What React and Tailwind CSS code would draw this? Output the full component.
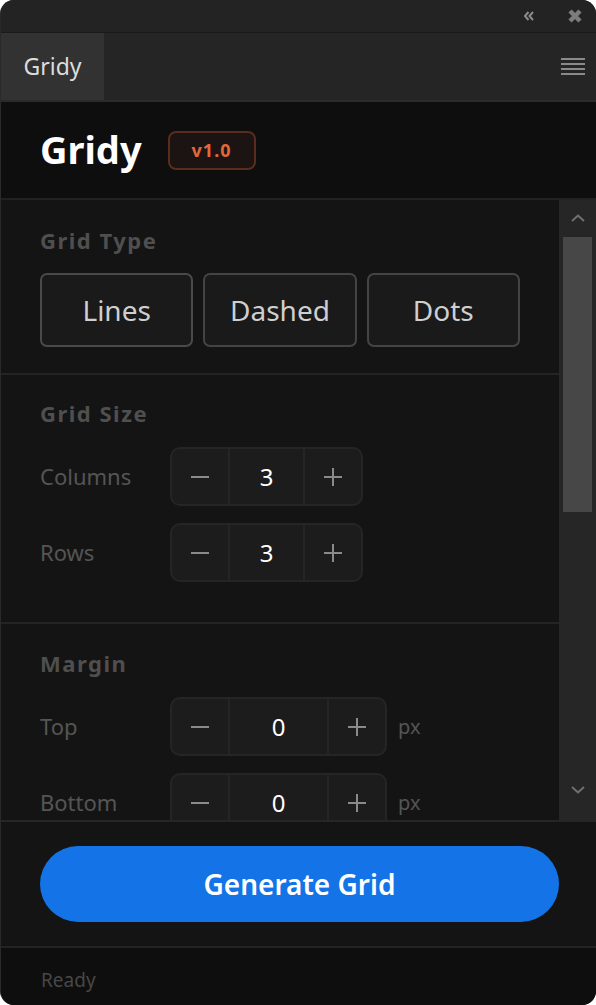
import React, { useState } from 'react';

const font = { fontFamily: '"Noto Sans", "Open Sans", sans-serif' };

function Stepper({ value, onChange, valueWidth }) {
  return (
    <div className="flex h-[59px] rounded-[10px] border-2 border-[#252525] bg-[#1c1c1c] overflow-hidden">
      <button
        onClick={() => onChange(value - 1)}
        className="w-[58px] flex items-center justify-center text-[#8a8a8a] border-r-2 border-[#252525]"
      >
        <svg width="18" height="2" viewBox="0 0 18 2"><rect width="18" height="2" fill="currentColor" /></svg>
      </button>
      <div className={`${valueWidth} flex items-center justify-center text-white text-[24px]`}>{value}</div>
      <button
        onClick={() => onChange(value + 1)}
        className="w-[58px] flex items-center justify-center text-[#8a8a8a] border-l-2 border-[#252525]"
      >
        <svg width="18" height="18" viewBox="0 0 18 18">
          <rect y="8" width="18" height="2" fill="currentColor" />
          <rect x="8" width="2" height="18" fill="currentColor" />
        </svg>
      </button>
    </div>
  );
}

function Row({ label, children }) {
  return (
    <div className="flex items-center">
      <span className="w-[130px] text-[22px] text-[#555]">{label}</span>
      {children}
    </div>
  );
}

function SectionTitle({ children }) {
  return <h3 className="text-[22px] font-bold tracking-[1.5px] text-[#4f4f4f] leading-[30px]">{children}</h3>;
}

export default function App() {
  const [type, setType] = useState('Lines');
  const [cols, setCols] = useState(3);
  const [rows, setRows] = useState(3);
  const [top, setTop] = useState(0);
  const [bottom, setBottom] = useState(0);

  return (
    <div className="w-[596px] h-[1005px] bg-white" style={font}>
      <div className="h-full flex flex-col rounded-[14px] overflow-hidden bg-[#141414] border-l border-[#2a2a2a]">
        {/* title bar */}
        <div className="h-[33px] shrink-0 bg-[#232323] border-b border-[#1a1a1a] flex items-center justify-end gap-[34px] pr-[14px]">
          <svg width="10" height="10" viewBox="0 0 10 10" className="text-[#8a8a8a]">
            <path d="M4.5 1 L1 5 L4.5 9 M9 1 L5.5 5 L9 9" fill="none" stroke="currentColor" strokeWidth="2" />
          </svg>
          <svg width="14" height="14" viewBox="0 0 14 14" className="text-[#7c7c7c]">
            <path d="M2 2 L12 12 M12 2 L2 12" fill="none" stroke="currentColor" strokeWidth="4.5" />
          </svg>
        </div>

        {/* tab bar */}
        <div className="h-[69px] shrink-0 bg-[#252525] flex items-stretch justify-between border-b-2 border-[#2b2b2b]">
          <div className="w-[103px] bg-[#323232] flex items-center justify-center text-[23px] text-[#dcdcdc]">Gridy</div>
          <div className="flex flex-col justify-center gap-[3px] pr-[11px]">
            <span className="block w-[24px] h-[2px] bg-[#8a8a8a]" />
            <span className="block w-[24px] h-[2px] bg-[#8a8a8a]" />
            <span className="block w-[24px] h-[2px] bg-[#8a8a8a]" />
            <span className="block w-[24px] h-[2px] bg-[#8a8a8a]" />
          </div>
        </div>

        {/* header */}
        <div className="h-[98px] shrink-0 bg-[#0e0e0e] flex items-center gap-[26px] pl-[39px] border-b-2 border-[#222]">
          <h1 className="text-[38px] font-bold text-white leading-none pb-[2px]">Gridy</h1>
          <span className="h-[39px] px-[22px] flex items-center rounded-[8px] border-2 border-[#5a2c1b] bg-[#1c1412] text-[#e2683a] text-[18px] font-bold tracking-[1px]">
            v1.0
          </span>
        </div>

        {/* content */}
        <div className="h-[620px] shrink-0 flex">
          <div className="flex-1 overflow-hidden">
            <section className="px-[39px] pt-[25px] pb-[26px] border-b-2 border-[#242424]">
              <SectionTitle>Grid Type</SectionTitle>
              <div className="mt-[18px] grid grid-cols-3 gap-[10px]">
                {['Lines', 'Dashed', 'Dots'].map((t) => (
                  <button
                    key={t}
                    onClick={() => setType(t)}
                    className={`h-[74px] rounded-[7px] border-2 ${type === t ? 'border-[#4a4a4a]' : 'border-[#444]'} bg-[#1a1a1a] text-[28px] text-[#cfcfcf]`}
                  >
                    {t}
                  </button>
                ))}
              </div>
            </section>

            <section className="px-[39px] pt-[23px] pb-[40px] border-b-2 border-[#242424]">
              <SectionTitle>Grid Size</SectionTitle>
              <div className="mt-[19px] flex flex-col gap-[17px]">
                <Row label="Columns">
                  <Stepper value={cols} onChange={setCols} valueWidth="w-[73px]" />
                </Row>
                <Row label="Rows">
                  <Stepper value={rows} onChange={setRows} valueWidth="w-[73px]" />
                </Row>
              </div>
            </section>

            <section className="px-[39px] pt-[24px]">
              <SectionTitle>Margin</SectionTitle>
              <div className="mt-[19px] flex flex-col gap-[17px]">
                <Row label="Top">
                  <Stepper value={top} onChange={setTop} valueWidth="w-[97px]" />
                  <span className="ml-[11px] text-[20px] text-[#555]">px</span>
                </Row>
                <Row label="Bottom">
                  <Stepper value={bottom} onChange={setBottom} valueWidth="w-[97px]" />
                  <span className="ml-[11px] text-[20px] text-[#555]">px</span>
                </Row>
              </div>
            </section>
          </div>

          {/* scrollbar */}
          <div className="w-[37px] bg-[#262626] flex flex-col items-center">
            <svg width="14" height="8" viewBox="0 0 14 8" className="mt-[14px] text-[#707070]">
              <path d="M1 7 L7 1.5 L13 7" fill="none" stroke="currentColor" strokeWidth="2" />
            </svg>
            <div className="mt-[15px] w-[29px] h-[275px] bg-[#474747]" />
            <div className="flex-1" />
            <svg width="14" height="8" viewBox="0 0 14 8" className="mb-[26px] text-[#707070]">
              <path d="M1 1 L7 6.5 L13 1" fill="none" stroke="currentColor" strokeWidth="2" />
            </svg>
          </div>
        </div>

        {/* footer */}
        <div className="shrink-0 border-t-2 border-[#262626] px-[39px] py-[24px] bg-[#141414]">
          <button className="w-[519px] h-[76px] rounded-full bg-[#1473e6] text-white text-[28px] font-semibold">
            Generate Grid
          </button>
        </div>

        {/* status */}
        <div className="flex-1 bg-[#0e0e0e] border-t-2 border-[#232323] pl-[40px] pt-[18px]">
          <span className="text-[19px] text-[#474747]">Ready</span>
        </div>
      </div>
    </div>
  );
}
